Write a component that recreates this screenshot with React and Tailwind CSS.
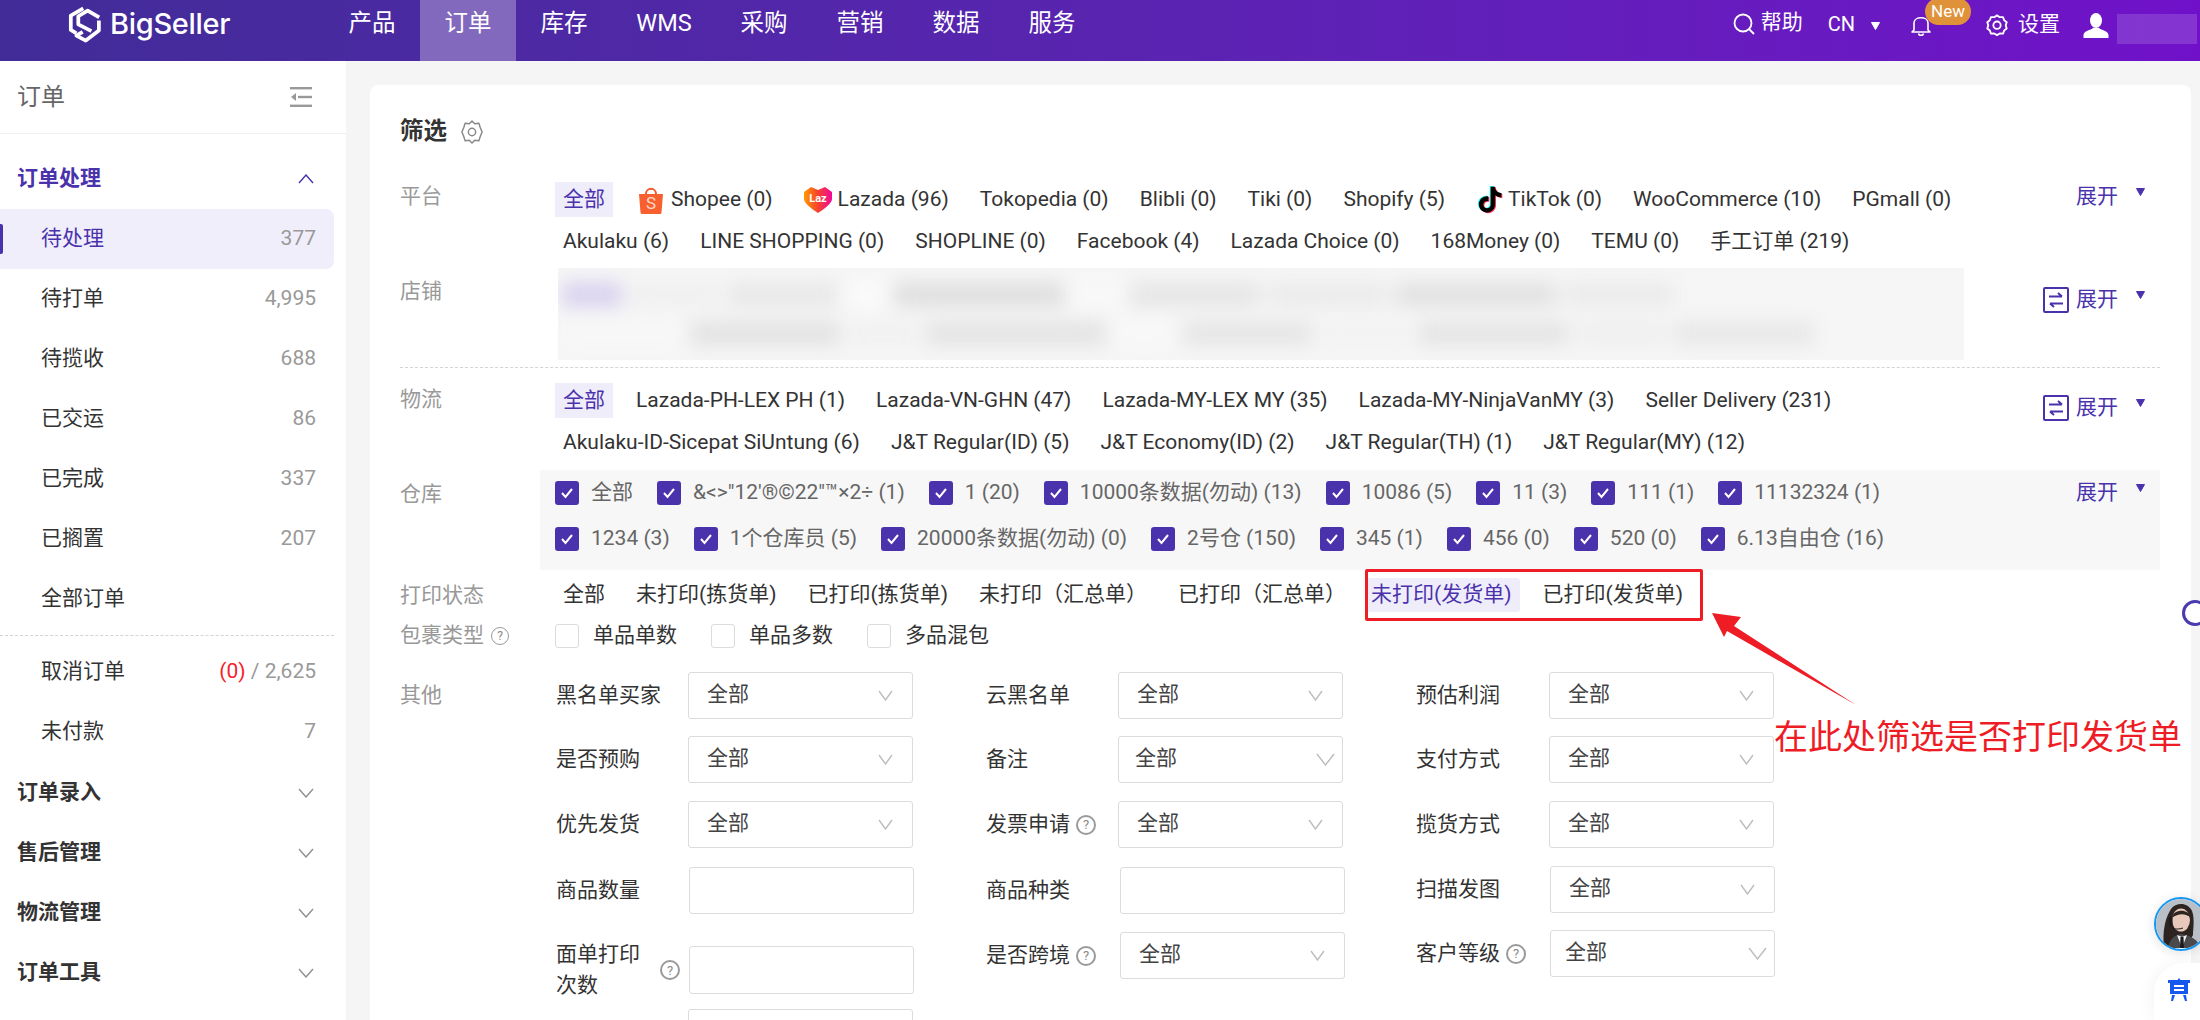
import React from "react";

const Tri = ({ color = "#4a32ad", cls = "" }) => (
  <svg width="9" height="8" viewBox="0 0 9 8" className={cls}>
    <polygon points="0.5,0.5 8.5,0.5 4.5,7.5" fill={color} stroke={color} strokeLinejoin="round" />
  </svg>
);

const Chevron = ({ w = 15, h = 11, color = "#bdbdbd", up = false }) => (
  <svg width={w} height={h} viewBox={`0 0 ${w} ${h}`} className="shrink-0" fill="none">
    <polyline
      points={up ? `1,${h - 1} ${w / 2},1 ${w - 1},${h - 1}` : `1,1 ${w / 2},${h - 1} ${w - 1},1`}
      stroke={color}
      strokeWidth="1.4"
    />
  </svg>
);

const Help = ({ cls = "" }) => (
  <span className={`inline-flex h-[20px] w-[20px] shrink-0 items-center justify-center rounded-full border-2 border-[#9a9a9a] text-[13px] leading-none text-[#8a8a8a] ${cls}`}>
    ?
  </span>
);

const Check = () => (
  <span className="flex h-[24px] w-[24px] shrink-0 items-center justify-center rounded-[3px] bg-[#4a32ad]">
    <svg width="16" height="14" viewBox="0 0 16 14" fill="none">
      <polyline points="3,7 6.5,11 13,3" stroke="#fff" strokeWidth="2" />
    </svg>
  </span>
);

const Toggle = () => (
  <svg width="26" height="26" viewBox="0 0 26 26" fill="none" className="shrink-0">
    <rect x="1" y="1" width="24" height="24" rx="1" stroke="#4a32ad" strokeWidth="2" />
    <path d="M6 9.5H19M15 6L19 9.5" stroke="#4a32ad" strokeWidth="2" />
    <path d="M20 16.5H7M11 20L7 16.5" stroke="#4a32ad" strokeWidth="2" />
  </svg>
);

const Expand = ({ icon = false, cls = "" }) => (
  <div className={`flex h-[35px] w-[117px] shrink-0 items-center ${cls}`}>
    <span className="flex w-[33px] shrink-0">{icon && <Toggle />}</span>
    <span className="text-[#4a32ad]">展开</span>
    <Tri cls="ml-[18px] -mt-[10px]" />
  </div>
);

const Item = ({ children, active = false, cls = "" }) => (
  <span
    className={`flex h-[35px] shrink-0 items-center whitespace-nowrap px-[8px] ${
      active ? "bg-[#f0edfb] text-[#4a32ad]" : "text-[#333]"
    } ${cls}`}
  >
    {children}
  </span>
);

const Row = ({ children }) => <div className="flex gap-[15px]">{children}</div>;

const Shopee = () => (
  <svg width="26" height="28" viewBox="0 0 26 28" className="mr-[7px] ml-[2px] shrink-0">
    <path d="M8 8C8 1 18 1 18 8" fill="none" stroke="#f6552b" strokeWidth="1.8" />
    <path d="M1 8H25L23.5 26.5Q23.4 28 22 28H4Q2.6 28 2.5 26.5Z" fill="#f9602f" />
    <text x="13" y="23" textAnchor="middle" fontSize="17" fill="#ffd9c9" fontFamily="Roboto, sans-serif">S</text>
  </svg>
);

const Lazada = () => (
  <svg width="30" height="27" viewBox="0 0 30 27" className="mr-[5px] shrink-0">
    <defs>
      <linearGradient id="lz" x1="0" y1="0" x2="1" y2="0">
        <stop offset="0" stopColor="#ff9a00" />
        <stop offset="0.5" stopColor="#f7412d" />
        <stop offset="1" stopColor="#f3089c" />
      </linearGradient>
    </defs>
    <path d="M1 6L8 1L15 4L22 1L29 6V13Q29 18 15 27Q1 18 1 13Z" fill="url(#lz)" />
    <text x="15" y="16" textAnchor="middle" fontSize="11" fontWeight="700" fill="#fff" fontFamily="Roboto, sans-serif">Laz</text>
  </svg>
);

const TT = "M12.525.02c1.31-.02 2.61-.01 3.91-.02.08 1.53.63 3.09 1.75 4.17 1.12 1.11 2.7 1.62 4.24 1.79v4.03c-1.44-.05-2.89-.35-4.2-.97-.57-.26-1.1-.59-1.62-.93-.01 2.92.01 5.84-.02 8.75-.08 1.4-.54 2.79-1.35 3.94-1.31 1.92-3.58 3.17-5.91 3.21-1.43.08-2.86-.31-4.08-1.03-2.02-1.19-3.44-3.37-3.65-5.71-.02-.5-.03-1-.01-1.49.18-1.9 1.12-3.72 2.58-4.96 1.66-1.44 3.98-2.13 6.15-1.72.02 1.48-.04 2.96-.04 4.44-.99-.32-2.15-.23-3.02.37-.63.41-1.11 1.04-1.36 1.75-.21.51-.15 1.07-.14 1.61.24 1.64 1.82 3.02 3.5 2.87 1.12-.01 2.19-.66 2.77-1.61.19-.33.4-.67.41-1.06.1-1.79.06-3.57.07-5.36.01-4.03-.01-8.05.02-12.07z";

const TikTok = () => (
  <svg width="28" height="30" viewBox="0 0 26 26" className="mr-[4px] shrink-0">
    <path d={TT} fill="#25f4ee" transform="translate(0.2 0)" />
    <path d={TT} fill="#fe2c55" transform="translate(2 1.2)" />
    <path d={TT} fill="#000" transform="translate(1.1 0.6)" />
  </svg>
);

const Select = ({ pad = "pl-[18px]", pr = "pr-[19px]", cw = 15, ch = 11, cls = "" }) => (
  <div className={`flex h-[47px] w-[225px] shrink-0 items-center justify-between rounded-[3px] border border-[#dcdcdc] bg-white pb-[1px] text-[#444] ${pad} ${pr} ${cls}`}>
    <span>全部</span>
    <Chevron w={cw} h={ch} />
  </div>
);

const Input = ({ cls = "" }) => (
  <div className={`h-[47px] w-[225px] shrink-0 rounded-[3px] border border-[#dcdcdc] bg-white ${cls}`} />
);

const Field = ({ label, help = false, children, cls = "" }) => (
  <div className={`flex items-center ${cls}`}>
    <div className="flex w-[132px] shrink-0 items-center gap-[6px] text-[#333]">
      <span className="whitespace-nowrap">{label}</span>
      {help && <Help />}
    </div>
    {children}
  </div>
);

const SideRow = ({ label, count, active }) => (
  <div className={`relative flex h-[60px] w-[334px] items-center justify-between pl-[41px] pr-[18px] ${active ? "rounded-r-[8px] bg-[#f1eefc] text-[#4a32ad]" : "text-[#333]"}`}>
    {active && <span className="absolute left-0 top-[15px] h-[30px] w-[3px] rounded-r-[2px] bg-[#4a32ad]" />}
    <span>{label}</span>
    <span className="text-[#999]">{count}</span>
  </div>
);

const SideHead = ({ label, open, cls = "" }) => (
  <div className={`flex h-[60px] w-[334px] items-center justify-between pl-[17px] pr-[20px] font-bold ${open ? "text-[#4a32ad]" : "text-[#333]"} ${cls}`}>
    <span>{label}</span>
    <Chevron w={16} h={10} color={open ? "#4a32ad" : "#8f8f8f"} up={open} />
  </div>
);

const NAV = [
  ["产品", "w-[96px]"],
  ["订单", "w-[96px] bg-[#8269bd]"],
  ["库存", "w-[96px]"],
  ["WMS", "w-[104px]"],
  ["采购", "w-[96px]"],
  ["营销", "w-[96px]"],
  ["数据", "w-[96px]"],
  ["服务", "w-[96px]"],
];

const WH1 = ["全部", `&<>"12'®©22"™×2÷ (1)`, "1 (20)", "10000条数据(勿动) (13)", "10086 (5)", "11 (3)", "111 (1)", "11132324 (1)"];
const WH2 = ["1234 (3)", "1个仓库员 (5)", "20000条数据(勿动) (0)", "2号仓 (150)", "345 (1)", "456 (0)", "520 (0)", "6.13自由仓 (16)"];

const BLUR1 = ["w-[60px] bg-[#d9d2ef]", "w-[90px] bg-[#f0f0f0]", "w-[110px] bg-[#e8e8e8]", "w-[40px] bg-[#fafafa]", "w-[170px] bg-[#dfdfdf]", "w-[50px] bg-[#f8f8f8]", "w-[130px] bg-[#e6e6e6]", "w-[120px] bg-[#ebebeb]", "w-[160px] bg-[#e2e2e2]", "w-[110px] bg-[#ebebeb]"];
const BLUR2 = ["w-[120px] bg-[#f7f7f7]", "w-[150px] bg-[#e3e3e3]", "w-[70px] bg-[#f1f1f1]", "w-[180px] bg-[#e4e4e4]", "w-[60px] bg-[#f8f8f8]", "w-[130px] bg-[#e6e6e6]", "w-[90px] bg-[#f2f2f2]", "w-[150px] bg-[#e5e5e5]", "w-[90px] bg-[#efefef]", "w-[140px] bg-[#e8e8e8]"];

export default function App() {
  return (
    <div className="relative flex h-[1020px] w-[2200px] flex-col overflow-hidden bg-[#f5f5f5] font-['Roboto','Noto_Sans_CJK_SC',sans-serif] text-[21px] text-[#333]">
      {/* header */}
      <header className="flex h-[61px] shrink-0 bg-linear-to-r from-[#412c98] to-[#7011c9] text-white">
        <div className="flex h-full w-[324px] shrink-0 items-start pl-[67px] pt-[5px]">
          <svg width="36" height="39" viewBox="20 10 115 125" fill="none" className="shrink-0">
            <g stroke="#fff" strokeWidth="12" strokeLinejoin="round">
              <path d="M72 21L32 44V90L50 101" />
              <path d="M123 50L86 28L56 46V72L98 94" />
              <path d="M122 60V92L80 124L50 108L70 96" />
            </g>
          </svg>
          <span className="ml-[7px] mt-[1px] font-['Inter',sans-serif] text-[29px] leading-[36px] font-medium tracking-[-0.3px]">BigSeller</span>
        </div>
        <nav className="flex h-full">
          {NAV.map(([t, c]) => (
            <div key={t} className={`flex h-full justify-center pt-[6px] text-[23.5px] leading-[34px] ${c}`}>{t}</div>
          ))}
        </nav>
        <div className="ml-auto flex h-full items-start pr-[3px]">
          <svg width="22" height="22" viewBox="0 0 22 22" fill="none" className="mt-[13px] shrink-0">
            <circle cx="10" cy="10" r="8.5" stroke="#fff" strokeWidth="1.8" />
            <path d="M16 16L21 21" stroke="#fff" strokeWidth="1.8" />
          </svg>
          <span className="ml-[6px] mt-[7px] leading-[30px]">帮助</span>
          <span className="ml-[25px] mt-[9px] text-[20px] leading-[30px]">CN</span>
          <Tri color="#fff" cls="ml-[16px] mt-[22px]" />
          <div className="relative ml-[31px] mt-[15px]">
            <svg width="20" height="21" viewBox="0 0 20 21" fill="none">
              <path d="M3 15V8C3 1 17 1 17 8V15L19 17H1Z" stroke="#fff" strokeWidth="1.6" strokeLinejoin="round" />
              <path d="M7.5 18.5C8 21 12 21 12.5 18.5" stroke="#fff" strokeWidth="1.6" />
            </svg>
            <span className="absolute -top-[17px] left-[14px] flex h-[27px] w-[46px] items-center justify-center rounded-[14px] bg-[#e0923a] text-[17px] leading-none text-white">New</span>
          </div>
          <svg width="22" height="22" viewBox="0 0 24 24" fill="none" className="ml-[55px] mt-[14px] shrink-0">
            <path d="M12 1.5L15 3.5L18.6 3.4L19.8 6.8L22.6 9L21.5 12.4L22.6 15.8L19.8 18L18.6 21.4L15 21.3L12 23L9 21.3L5.4 21.4L4.2 18L1.4 15.8L2.5 12.4L1.4 9L4.2 6.8L5.4 3.4L9 3.5Z" stroke="#fff" strokeWidth="2" strokeLinejoin="round" />
            <circle cx="12" cy="12.2" r="4" stroke="#fff" strokeWidth="2" />
          </svg>
          <span className="ml-[10px] mt-[9px] leading-[30px]">设置</span>
          <svg width="26" height="25" viewBox="0 0 26 25" fill="#fff" className="ml-[23px] mt-[13px] shrink-0">
            <ellipse cx="13" cy="7.5" rx="6" ry="7.5" />
            <path d="M0.5 25V22C0.5 18 8 17 10 15H16C18 17 25.5 18 25.5 22V25Z" />
          </svg>
          <div className="ml-[8px] mt-[14px] h-[30px] w-[80px] bg-white/15" />
        </div>
      </header>

      <div className="flex min-h-0 flex-1">
        {/* sidebar */}
        <aside className="flex w-[346px] shrink-0 flex-col bg-white">
          <div className="flex h-[73px] shrink-0 items-center justify-between border-b border-[#f0f0f0] pb-[1px] pl-[17px] pr-[34px] text-[24px] text-[#666]">
            <span>订单</span>
            <svg width="22" height="20" viewBox="0 0 22 20" fill="#999" className="shrink-0">
              <rect x="0" y="0" width="22" height="2.4" />
              <rect x="0" y="17.6" width="22" height="2.4" />
              <rect x="8" y="8.8" width="14" height="2.4" />
              <polygon points="1,10 6,6 6,14" />
            </svg>
          </div>
          <div className="mt-[15px] flex flex-col">
            <SideHead label="订单处理" open />
            <SideRow label="待处理" count="377" active />
            <SideRow label="待打单" count="4,995" />
            <SideRow label="待揽收" count="688" />
            <SideRow label="已交运" count="86" />
            <SideRow label="已完成" count="337" />
            <SideRow label="已搁置" count="207" />
            <SideRow label="全部订单" count="" />
            <div className="mt-[6px] w-[334px] border-t border-dashed border-[#d4d4d4]" />
            <div className="mt-[6px] flex h-[60px] w-[334px] items-center justify-between pl-[41px] pr-[18px]">
              <span>取消订单</span>
              <span className="text-[#999]"><span className="text-[#f5222d]">(0)</span> / 2,625</span>
            </div>
            <SideRow label="未付款" count="7" />
            <SideHead label="订单录入" cls="mt-[1px]" />
            <SideHead label="售后管理" />
            <SideHead label="物流管理" />
            <SideHead label="订单工具" />
          </div>
        </aside>

        {/* main */}
        <main className="min-w-0 flex-1 pl-[24px] pr-[9px] pt-[24px]">
          <div className="h-[1000px] rounded-[8px] bg-white pl-[30px] pr-[31px] pt-[32px]">
            <div className="flex h-[30px] items-center gap-[14px]">
              <span className="text-[23.5px] font-bold text-[#333]">筛选</span>
              <svg width="22" height="24" viewBox="0 0 24 26" fill="none" className="shrink-0">
                <path d="M12 1L15 4L19.5 3.5L21 8L23 13L21 18L19.5 22.5L15 22L12 25L9 22L4.5 22.5L3 18L1 13L3 8L4.5 3.5L9 4Z" stroke="#888" strokeWidth="1.6" strokeLinejoin="round" />
                <circle cx="12" cy="13" r="4" stroke="#888" strokeWidth="1.6" />
              </svg>
            </div>

            {/* 平台 */}
            <div className="mt-[35px] flex">
              <div className="-mt-[3px] h-[35px] w-[155px] shrink-0 leading-[35px] text-[#999]">平台</div>
              <div className="flex flex-1 flex-col gap-[7px]">
                <Row>
                  <Item active>全部</Item>
                  <Item><Shopee />Shopee (0)</Item>
                  <Item cls="-ml-[1px]"><Lazada />Lazada (96)</Item>
                  <Item>Tokopedia (0)</Item>
                  <Item>Blibli (0)</Item>
                  <Item>Tiki (0)</Item>
                  <Item>Shopify (5)</Item>
                  <Item><TikTok />TikTok (0)</Item>
                  <Item>WooCommerce (10)</Item>
                  <Item>PGmall (0)</Item>
                </Row>
                <Row>
                  <Item>Akulaku (6)</Item>
                  <Item>LINE SHOPPING (0)</Item>
                  <Item>SHOPLINE (0)</Item>
                  <Item>Facebook (4)</Item>
                  <Item>Lazada Choice (0)</Item>
                  <Item>168Money (0)</Item>
                  <Item>TEMU (0)</Item>
                  <Item>手工订单 (219)</Item>
                </Row>
              </div>
              <Expand cls="-mt-[3px]" />
            </div>

            {/* 店铺 */}
            <div className="mt-[9px] flex">
              <div className="mt-[6px] h-[35px] w-[155px] shrink-0 leading-[35px] text-[#999]">店铺</div>
              <div className="flex-1">
                <div className="ml-[3px] h-[92px] w-[1406px] overflow-hidden bg-[#f6f6f6]">
                  <div className="flex h-full flex-col gap-[14px] px-[4px] py-[14px] blur-[9px]">
                    <div className="flex h-[26px] gap-[8px]">
                      {BLUR1.map((c, i) => <span key={i} className={`h-full shrink-0 ${c}`} />)}
                    </div>
                    <div className="flex h-[26px] gap-[8px]">
                      {BLUR2.map((c, i) => <span key={i} className={`h-full shrink-0 ${c}`} />)}
                    </div>
                  </div>
                </div>
              </div>
              <Expand icon cls="mt-[14px]" />
            </div>

            <div className="mt-[7px] border-t border-dashed border-[#d4d4d4]" />

            {/* 物流 */}
            <div className="mt-[15px] flex">
              <div className="-mt-[1px] h-[35px] w-[155px] shrink-0 leading-[35px] text-[#999]">物流</div>
              <div className="flex flex-1 flex-col gap-[7px]">
                <Row>
                  <Item active>全部</Item>
                  <Item>Lazada-PH-LEX PH (1)</Item>
                  <Item>Lazada-VN-GHN (47)</Item>
                  <Item>Lazada-MY-LEX MY (35)</Item>
                  <Item>Lazada-MY-NinjaVanMY (3)</Item>
                  <Item>Seller Delivery (231)</Item>
                </Row>
                <Row>
                  <Item>Akulaku-ID-Sicepat SiUntung (6)</Item>
                  <Item>J&amp;T Regular(ID) (5)</Item>
                  <Item>J&amp;T Economy(ID) (2)</Item>
                  <Item>J&amp;T Regular(TH) (1)</Item>
                  <Item>J&amp;T Regular(MY) (12)</Item>
                </Row>
              </div>
              <Expand icon cls="mt-[7px]" />
            </div>

            {/* 仓库 */}
            <div className="mt-[10px] flex">
              <div className="mt-[7px] h-[35px] w-[140px] shrink-0 leading-[35px] text-[#999]">仓库</div>
              <div className="flex h-[100px] flex-1 bg-[#f7f7f7] pl-[15px] pt-[11px]">
                <div className="flex flex-1 flex-col gap-[22px]">
                  {[WH1, WH2].map((r, i) => (
                    <div key={i} className="flex h-[24px] gap-[24px]">
                      {r.map((t) => (
                        <span key={t} className="flex shrink-0 items-center gap-[12px] whitespace-nowrap text-[#666]">
                          <Check />
                          {t}
                        </span>
                      ))}
                    </div>
                  ))}
                </div>
                <Expand cls="-mt-[6px]" />
              </div>
            </div>

            {/* 打印状态 */}
            <div className="mt-[8px] flex">
              <div className="h-[34px] w-[155px] shrink-0 leading-[34px] text-[#999]">打印状态</div>
              <div className="flex h-[34px] gap-[15px]">
                <Item cls="!h-[34px]">全部</Item>
                <Item cls="!h-[34px]">未打印(拣货单)</Item>
                <Item cls="!h-[34px]">已打印(拣货单)</Item>
                <Item cls="!h-[34px]">未打印（汇总单）</Item>
                <Item cls="!h-[34px]">已打印（汇总单）</Item>
                <span className="-ml-[2px] flex h-[34px] items-center whitespace-nowrap rounded-[3px] bg-[#f0edfb] pl-[4px] pr-[8px] text-[#4a32ad]">未打印(发货单)</span>
                <Item cls="!h-[34px]">已打印(发货单)</Item>
              </div>
            </div>

            {/* 包裹类型 */}
            <div className="mt-[12px] flex">
              <div className="flex h-[24px] w-[155px] shrink-0 items-center gap-[7px] text-[#999]">
                包裹类型 <Help cls="!h-[18px] !w-[18px] !border-[1.5px] !text-[12px]" />
              </div>
              <div className="flex h-[24px] gap-[34px]">
                {["单品单数", "单品多数", "多品混包"].map((t) => (
                  <span key={t} className="flex items-center gap-[14px] text-[#333]">
                    <span className="h-[24px] w-[24px] rounded-[3px] border border-[#dcdcdc] bg-white" />
                    {t}
                  </span>
                ))}
              </div>
            </div>

            {/* 其他 */}
            <div className="mt-[24px] flex">
              <div className="mt-[6px] h-[35px] w-[156px] shrink-0 leading-[35px] text-[#999]">其他</div>
              <div className="flex gap-[73px]">
                <div className="flex w-[357px] flex-col">
                  <Field label="黑名单买家"><Select /></Field>
                  <Field label="是否预购" cls="mt-[17px]"><Select /></Field>
                  <Field label="优先发货" cls="mt-[18px]"><Select /></Field>
                  <Field label="商品数量" cls="mt-[19px]"><Input cls="ml-[1px]" /></Field>
                  <div className="mt-[25px] flex items-center">
                    <div className="w-[84px] shrink-0 leading-[31px] text-[#333]">面单打印次数</div>
                    <Help cls="ml-[20px] mr-[8px]" />
                    <Input cls="ml-[1px] h-[48px]" />
                  </div>
                  <Field label="快速订单" cls="mt-[8px]"><Select /></Field>
                </div>
                <div className="flex w-[357px] flex-col">
                  <Field label="云黑名单"><Select /></Field>
                  <Field label="备注" cls="mt-[17px]"><Select pad="pl-[16px]" pr="pr-[7px]" cw={19} ch={13} /></Field>
                  <Field label="发票申请" help cls="mt-[18px]"><Select /></Field>
                  <Field label="商品种类" cls="mt-[19px]"><Input cls="ml-[2px]" /></Field>
                  <Field label="是否跨境" help cls="mt-[18px]"><Select cls="ml-[2px]" /></Field>
                </div>
                <div className="flex w-[357px] flex-col">
                  <Field label="预估利润"><Select cls="ml-[1px]" /></Field>
                  <Field label="支付方式" cls="mt-[17px]"><Select cls="ml-[1px]" /></Field>
                  <Field label="揽货方式" cls="mt-[18px]"><Select cls="ml-[1px]" /></Field>
                  <Field label="扫描发图" cls="mt-[18px]"><Select cls="ml-[2px]" /></Field>
                  <Field label="客户等级" help cls="mt-[17px]"><Select pad="pl-[14px]" pr="pr-[7px]" cw={19} ch={13} cls="ml-[2px]" /></Field>
                </div>
              </div>
            </div>
          </div>
        </main>
      </div>

      {/* annotation overlay */}
      <div className="absolute left-[1365px] top-[569px] h-[52px] w-[338px] rounded-[2px] border-[3px] border-[#ee1c25]" />
      <svg className="pointer-events-none absolute left-0 top-0" width="2200" height="1020">
        <polygon points="1712,613 1741,617 1734,626 1856,705 1727,631 1724,637" fill="#ee1c25" />
      </svg>
      <div className="absolute left-[1774px] top-[713px] whitespace-nowrap text-[34px] leading-[48px] text-[#ee1c25]">在此处筛选是否打印发货单</div>

      {/* floating widgets */}
      <div className="absolute left-[2182px] top-[600px] h-[26px] w-[26px] rounded-full border-[3px] border-[#4a3ab0] bg-white" />
      <div className="absolute left-[2154px] top-[897px] h-[54px] w-[54px] overflow-hidden rounded-full border-[2.5px] border-[#1296f5] shadow-[0_2px_12px_rgba(0,0,0,0.12)]">
        <svg width="49" height="49" viewBox="0 0 49 49">
          <rect width="49" height="49" fill="#b9bfc6" />
          <path d="M8 49C6 30 10 18 15 10C20 3 32 3 36 12C39 20 37 30 37 36L30 49Z" fill="#2d2422" />
          <ellipse cx="25" cy="21" rx="9" ry="11.5" fill="#e8c8bb" />
          <path d="M16 19C17 10 33 9 35 19C30 14 22 14 16 19Z" fill="#2d2422" />
          <path d="M12 49C14 39 19 36 25 35C32 36 40 38 45 49Z" fill="#4a4a4d" />
          <path d="M21 36L26 49L31 36L26 38Z" fill="#f2f2f2" />
          <path d="M24.5 38H27.5L28 49H24Z" fill="#1b1b1f" />
          <rect x="13" y="18" width="3.5" height="9" rx="1.7" fill="#1b1b1f" />
          <path d="M15 27C16 30 21 31 27 29" stroke="#1b1b1f" strokeWidth="1" fill="none" />
        </svg>
      </div>
      <div className="absolute left-[2154px] top-[963px] flex h-[57px] w-[46px] justify-center rounded-tl-[30px] bg-white pl-[3px] pt-[15px] shadow-[-4px_0_14px_rgba(0,0,0,0.04)]">
        <svg width="24" height="23" viewBox="0 0 24 23" fill="#1558f0" className="shrink-0">
          <path d="M12 0L13.5 2H23V5H21V16H3V5H1V2H10.5Z" />
          <rect x="7" y="7" width="10" height="2" fill="#fff" />
          <rect x="7" y="11" width="10" height="2" fill="#fff" />
          <path d="M5 17H8L6 23H4ZM16 17H19L20 23H18Z" />
        </svg>
      </div>
    </div>
  );
}
